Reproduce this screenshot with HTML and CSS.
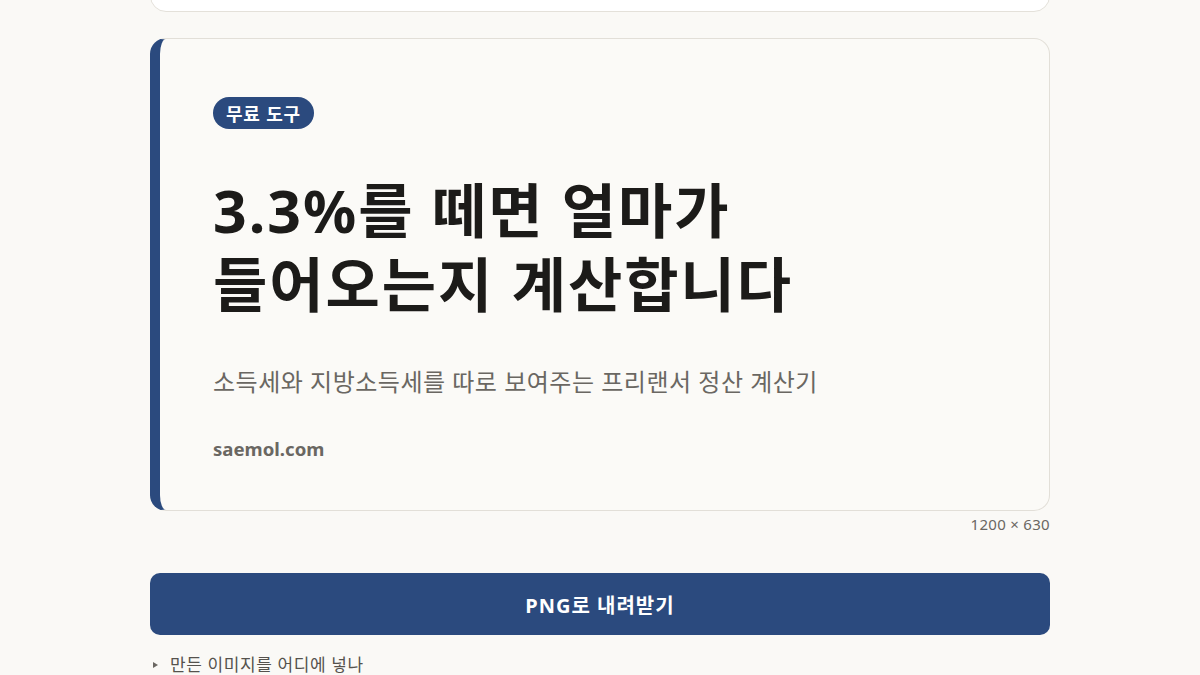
FILE: index.html
```html
<!DOCTYPE html>
<html lang="ko">
<head>
<meta charset="utf-8">
<title>3.3% 계산기 미리보기</title>
<link rel="stylesheet" href="styles.css">
</head>
<body>
<div class="wrap">
  <div class="prev-card"></div>
  <div class="preview">
    <span class="badge">무료 도구</span>
    <h1 class="title">3.3%를 떼면 얼마가<br>들어오는지 계산합니다</h1>
    <p class="subtitle">소득세와 지방소득세를 따로 보여주는 프리랜서 정산 계산기</p>
    <p class="domain">saemol.com</p>
  </div>
  <div class="size">1200 × 630</div>
  <button class="download">PNG로 내려받기</button>
  <details class="help">
    <summary>만든 이미지를 어디에 넣나</summary>
  </details>
</div>
</body>
</html>
```

FILE: styles.css
```css
html, body {
  margin: 0;
  padding: 0;
  background: #faf9f6;
  font-family: "Noto Sans", "Noto Sans CJK KR", sans-serif;
  overflow: hidden;
}
.wrap {
  width: 900px;
  margin: 0 auto;
  display: flex;
  flex-direction: column;
}
.prev-card {
  height: 60px;
  margin-top: -48px;
  background: #ffffff;
  border: 1px solid #e4e1da;
  border-radius: 16px;
  box-sizing: border-box;
}
.preview {
  margin-top: 26px;
  height: 473px;
  box-sizing: border-box;
  background: #fbfaf7;
  border: 1px solid #e2dfd8;
  border-left: 10px solid #2b4a7e;
  border-radius: 16px;
  padding: 58px 54px 0 53px;
  display: flex;
  flex-direction: column;
  align-items: flex-start;
}
.badge {
  display: inline-flex;
  align-items: center;
  height: 32px;
  padding: 0 13px;
  border-radius: 16px;
  background: #2b4a7e;
  color: #ffffff;
  font-weight: 700;
  font-size: 18px;
  letter-spacing: 0.8px;
  box-sizing: border-box;
}
.title {
  margin: 44px 0 0 0;
  font-size: 59px;
  line-height: 74px;
  font-weight: 700;
  color: #1c1b19;
  letter-spacing: 2px;
}
.title-line2 {
  letter-spacing: 2.8px;
}
.subtitle {
  margin: 44px 0 0 0;
  font-size: 24px;
  line-height: 34px;
  color: #6a6762;
  letter-spacing: 0.5px;
}
.domain {
  margin: 36px 0 0 0;
  font-size: 18.6px;
  line-height: 27px;
  font-weight: 700;
  color: #6a6762;
}
.size {
  margin-top: 3px;
  align-self: flex-end;
  font-size: 15px;
  line-height: 20px;
  color: #6a6762;
  letter-spacing: 0.3px;
}
.download {
  margin-top: 39px;
  height: 62px;
  border: none;
  border-radius: 10px;
  background: #2b4a7e;
  color: #ffffff;
  font-family: inherit;
  font-size: 20px;
  font-weight: 700;
  letter-spacing: 1px;
  cursor: pointer;
}
.help {
  margin-top: 20px;
  color: #55524d;
  font-size: 17px;
  line-height: 20px;
}
.help summary {
  list-style: none;
  display: flex;
  align-items: center;
  padding-left: 3px;
  letter-spacing: 0.6px;
}
.help summary::-webkit-details-marker {
  display: none;
}
.help summary::before {
  content: "";
  width: 0;
  height: 0;
  border-top: 3px solid transparent;
  border-bottom: 3px solid transparent;
  border-left: 5px solid #6a6762;
  margin-right: 12px;
}
```
